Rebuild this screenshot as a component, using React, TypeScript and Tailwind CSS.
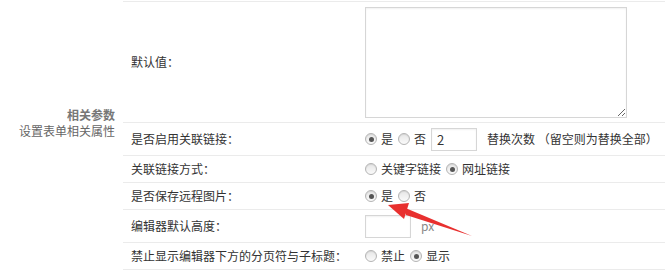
import React from "react";

const font = { fontFamily: '"Noto Sans CJK SC", "Liberation Sans", sans-serif' };

function Radio({ checked }: { checked?: boolean }) {
  return (
    <span className="inline-flex h-[12px] w-[12px] shrink-0 items-center justify-center rounded-full border border-[#b4b4b4] bg-gradient-to-b from-[#e6e6e6] to-[#fafafa] shadow-[inset_0_1px_1px_rgba(0,0,0,0.08)]">
      {checked && <span className="h-[5px] w-[5px] rounded-full bg-[#555]" />}
    </span>
  );
}

function Option({ label, checked, first }: { label: string; checked?: boolean; first?: boolean }) {
  return (
    <span className={`flex items-center ${first ? "" : "ml-[5px]"}`}>
      <Radio checked={checked} />
      <span className="ml-[4px]">{label}</span>
    </span>
  );
}

function Row({ label, h, children }: { label: string; h: string; children: React.ReactNode }) {
  return (
    <div className={`flex items-center border-b border-[#ebebeb] ${h}`}>
      <div className="w-[242px] shrink-0 pl-[8px]">{label}</div>
      <div className="flex items-center">{children}</div>
    </div>
  );
}

export default function App() {
  return (
    <div className="relative h-[272px] w-[665px] overflow-hidden bg-white text-[12px] leading-[14px] text-[#333]" style={font}>
      <div className="flex">
        {/* section title */}
        <div className="w-[123px] shrink-0 pr-[8px] pt-[107px] text-right leading-[16px]">
          <div className="font-bold text-[#777]">相关参数</div>
          <div className="text-[#666]">设置表单相关属性</div>
        </div>

        {/* form rows */}
        <div className="mt-[1px] flex-1 border-t border-[#ebebeb]">
          <Row label="默认值：" h="h-[121px]">
            <textarea className="block h-[111px] w-[262px] resize border border-[#d6d6d6] shadow-[inset_0_1px_2px_rgba(0,0,0,0.06)] outline-none" />
          </Row>
          <Row label="是否启用关联链接：" h="h-[33px]">
            <Option label="是" checked first />
            <Option label="否" />
            <input
              defaultValue="2"
              className="ml-[5px] h-[23px] w-[46px] border border-[#d6d6d6] px-[5px] text-[13px] outline-none shadow-[inset_0_1px_2px_rgba(0,0,0,0.06)]"
            />
            <span className="ml-[10px]">替换次数 （留空则为替换全部）</span>
          </Row>
          <Row label="关联链接方式：" h="h-[27px]">
            <Option label="关键字链接" first />
            <Option label="网址链接" checked />
          </Row>
          <Row label="是否保存远程图片：" h="h-[27px]">
            <Option label="是" checked first />
            <Option label="否" />
          </Row>
          <Row label="编辑器默认高度：" h="h-[33px]">
            <input className="h-[23px] w-[46px] border border-[#d6d6d6] outline-none shadow-[inset_0_1px_2px_rgba(0,0,0,0.06)]" />
            <span className="ml-[10px] text-[#888]">px</span>
          </Row>
          <Row label="禁止显示编辑器下方的分页符与子标题：" h="h-[27px]">
            <Option label="禁止" first />
            <Option label="显示" checked />
          </Row>
        </div>
      </div>

      {/* red annotation arrow */}
      <svg className="pointer-events-none absolute left-0 top-0" width="665" height="272">
        <polygon points="388,205 409,203 404,219" fill="#e8302f" />
        <polygon points="403,207 406,215 472,236" fill="#e8302f" />
      </svg>
    </div>
  );
}
